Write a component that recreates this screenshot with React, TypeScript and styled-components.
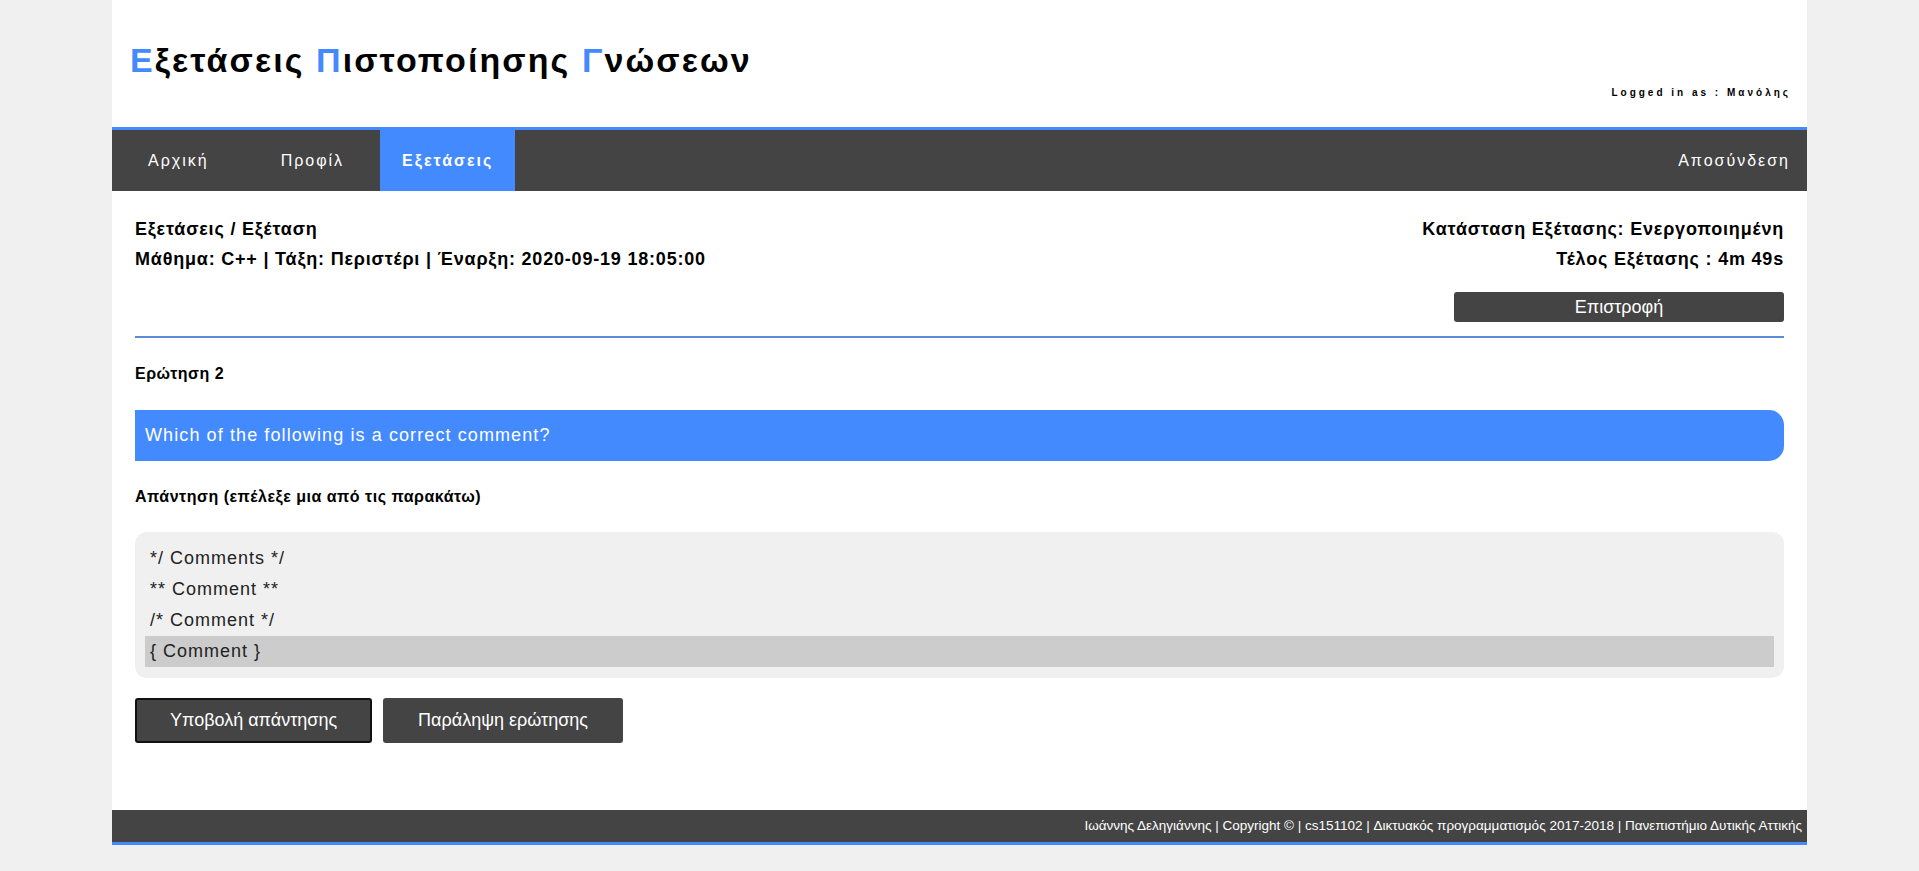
import React from "react";
import styled, { createGlobalStyle } from "styled-components";

const GlobalStyle = createGlobalStyle`
  html, body {
    margin: 0;
    padding: 0;
    background: #f0f0f0;
  }
  body {
    font-family: "Liberation Sans", Arial, sans-serif;
    color: #000;
  }
  * { box-sizing: border-box; }
`;

const Page = styled.div`
  width: 1695px;
  margin: 0 auto;
  background: #fff;
`;

const Header = styled.header`
  height: 127px;
  display: flex;
  flex-direction: column;
  padding: 0 16px 0 18px;
`;

const Title = styled.h1`
  margin: 42px 0 0;
  font-size: 34px;
  line-height: 36px;
  font-weight: bold;
  letter-spacing: 2.1px;
  color: #000;
`;

const Accent = styled.span`
  color: #448aff;
`;

const LoggedIn = styled.div`
  margin-top: 8px;
  align-self: flex-end;
  font-size: 10px;
  line-height: 13px;
  font-weight: bold;
  letter-spacing: 3px;
  color: #000;
`;

const Nav = styled.nav`
  display: flex;
  height: 64px;
  background: #444;
  border-top: 3px solid #448aff;
`;

const NavItem = styled.a<{ $active?: boolean; $right?: boolean }>`
  display: flex;
  align-items: center;
  padding: ${(p) => (p.$right ? "0 17px 0 36px" : p.$active ? "0 22px" : "0 36px")};
  margin-left: ${(p) => (p.$right ? "auto" : "0")};
  background: ${(p) => (p.$active ? "#448aff" : "transparent")};
  color: #fff;
  font-size: 16px;
  letter-spacing: 2px;
  font-weight: ${(p) => (p.$active ? "bold" : "normal")};
  text-decoration: none;
  cursor: pointer;
`;

const Main = styled.main`
  padding: 23px 23px 67px;
`;

const InfoRow = styled.div`
  display: flex;
  justify-content: space-between;
`;

const InfoCol = styled.div<{ $right?: boolean }>`
  display: flex;
  flex-direction: column;
  align-items: ${(p) => (p.$right ? "flex-end" : "flex-start")};
`;

const InfoLine = styled.div`
  font-size: 18px;
  line-height: 30px;
  font-weight: bold;
  letter-spacing: 0.8px;
  color: #000;
`;

const BackButton = styled.button`
  margin-top: 18px;
  width: 330px;
  height: 30px;
  border: none;
  border-radius: 3px;
  background: #444;
  color: #fff;
  font-family: inherit;
  font-size: 18px;
  cursor: pointer;
`;

const Divider = styled.hr`
  margin: 14px 0 0;
  border: none;
  height: 2px;
  background: #5b8bd9;
`;

const SectionLabel = styled.div`
  margin-top: 26px;
  font-size: 16px;
  line-height: 20px;
  font-weight: bold;
  letter-spacing: 0.5px;
  color: #000;
`;

const QuestionBox = styled.div`
  margin-top: 26px;
  height: 51px;
  padding-left: 10px;
  background: #448aff;
  border-radius: 0 15px 15px 0;
  color: #fff;
  font-size: 18px;
  line-height: 51px;
  letter-spacing: 1.1px;
`;

const AnswerList = styled.ul`
  list-style: none;
  margin: 25px 0 0;
  padding: 11px 10px;
  background: #f0f0f0;
  border-radius: 12px;
`;

const AnswerItem = styled.li<{ $selected?: boolean }>`
  height: 31px;
  line-height: 31px;
  padding-left: 5px;
  font-size: 18px;
  letter-spacing: 1px;
  color: #222;
  background: ${(p) => (p.$selected ? "#cccccc" : "transparent")};
  cursor: pointer;
`;

const Actions = styled.div`
  display: flex;
  gap: 11px;
  margin-top: 20px;
`;

const ActionButton = styled.button<{ $focused?: boolean }>`
  height: 45px;
  padding: 0 33px;
  border: 2px solid ${(p) => (p.$focused ? "#111" : "#444")};
  border-radius: 3px;
  background: #444;
  color: #fff;
  font-family: inherit;
  font-size: 18px;
  cursor: pointer;
`;

const Footer = styled.footer`
  height: 35px;
  padding-right: 5px;
  background: #444;
  border-bottom: 3px solid #448aff;
  color: #fff;
  font-size: 13.5px;
  line-height: 32px;
  text-align: right;
`;

const answers = ["*/ Comments */", "** Comment **", "/* Comment */", "{ Comment }"];

export default function App() {
  return (
    <>
      <GlobalStyle />
      <Page>
        <Header>
          <Title>
            <Accent>Ε</Accent>ξετάσεις <Accent>Π</Accent>ιστοποίησης <Accent>Γ</Accent>νώσεων
          </Title>
          <LoggedIn>Logged in as : Μανόλης</LoggedIn>
        </Header>
        <Nav>
          <NavItem>Αρχική</NavItem>
          <NavItem>Προφίλ</NavItem>
          <NavItem $active>Εξετάσεις</NavItem>
          <NavItem $right>Αποσύνδεση</NavItem>
        </Nav>
        <Main>
          <InfoRow>
            <InfoCol>
              <InfoLine>Εξετάσεις / Εξέταση</InfoLine>
              <InfoLine>Μάθημα: C++ | Τάξη: Περιστέρι | Έναρξη: 2020-09-19 18:05:00</InfoLine>
            </InfoCol>
            <InfoCol $right>
              <InfoLine>Κατάσταση Εξέτασης: Ενεργοποιημένη</InfoLine>
              <InfoLine>Τέλος Εξέτασης : 4m 49s</InfoLine>
              <BackButton>Επιστροφή</BackButton>
            </InfoCol>
          </InfoRow>
          <Divider />
          <SectionLabel>Ερώτηση 2</SectionLabel>
          <QuestionBox>Which of the following is a correct comment?</QuestionBox>
          <SectionLabel>Απάντηση (επέλεξε μια από τις παρακάτω)</SectionLabel>
          <AnswerList>
            {answers.map((a, i) => (
              <AnswerItem key={a} $selected={i === 3}>
                {a}
              </AnswerItem>
            ))}
          </AnswerList>
          <Actions>
            <ActionButton $focused>Υποβολή απάντησης</ActionButton>
            <ActionButton>Παράληψη ερώτησης</ActionButton>
          </Actions>
        </Main>
        <Footer>
          Ιωάννης Δεληγιάννης | Copyright © | cs151102 | Δικτυακός προγραμματισμός 2017-2018 | Πανεπιστήμιο Δυτικής Αττικής
        </Footer>
      </Page>
    </>
  );
}
